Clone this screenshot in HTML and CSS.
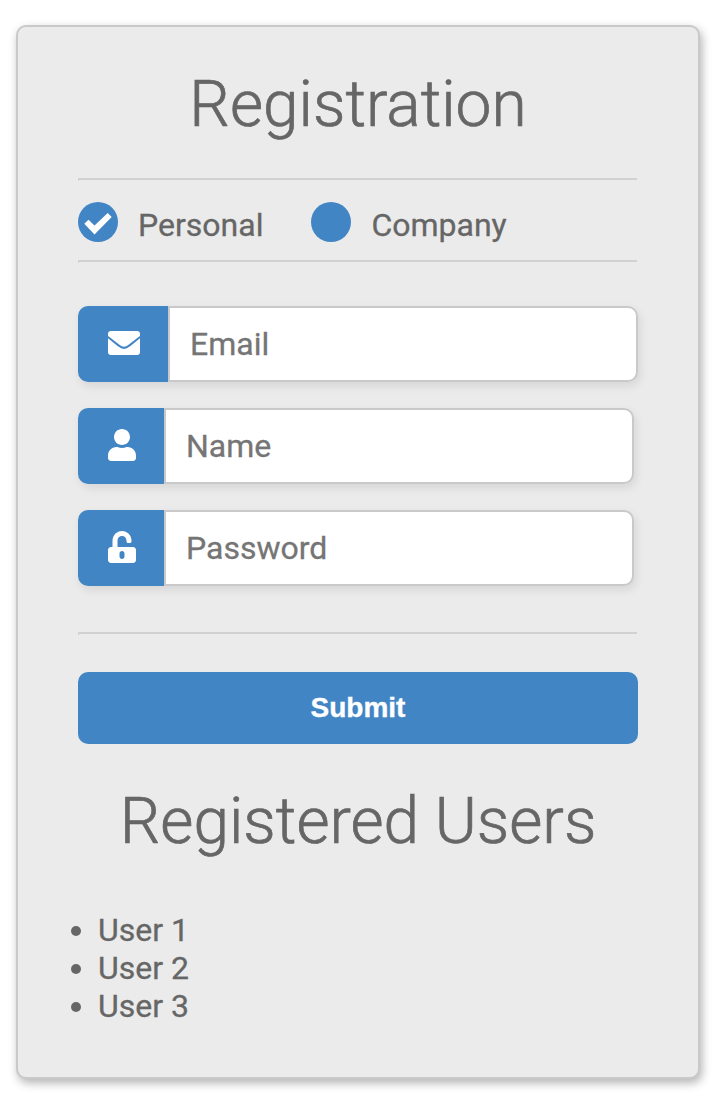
FILE: index.html
```html
<!DOCTYPE html>
<html lang="en">
<head>
<meta charset="utf-8">
<title>Registration</title>
<link rel="stylesheet" href="styles.css">
</head>
<body>
<main class="card">
  <h1 class="title">Registration</h1>
  <form class="form">
    <hr class="rule rule-first">
    <div class="types">
      <label class="type"><span class="radio"><svg class="check" viewBox="0 0 40 40"><path d="M6.300 21.700l4.200-3.900 6 5.700L29.700 11l4 4.100L16.500 32.500z" fill="#fff"/></svg></span><span class="type-text">Personal</span></label>
      <label class="type"><span class="radio"></span><span class="type-text">Company</span></label>
    </div>
    <hr class="rule">
    <div class="fields">
      <div class="field">
        <span class="icon icon-wide"><svg width="32" height="24" viewBox="0 0 32 24"><rect width="32" height="24" rx="3" fill="#fff"/><path d="M-.5 5.700L10.800 14.600Q16 19.100 21.200 14.600L32.500 5.700" fill="none" stroke="#4285c5" stroke-width="2"/></svg></span>
        <input class="input" type="text" placeholder="Email">
      </div>
      <div class="field">
        <span class="icon"><svg width="28" height="32" viewBox="0 0 448 512" fill="#fff"><path d="M224 256c70.700 0 128-57.300 128-128S294.700 0 224 0 96 57.300 96 128s57.300 128 128 128zm89.600 32h-16.700c-22.200 10.200-46.900 16-72.900 16s-50.600-5.800-72.900-16h-16.700C60.200 288 0 348.200 0 422.400V464c0 26.500 21.500 48 48 48h352c26.500 0 48-21.500 48-48v-41.600c0-74.200-60.200-134.400-134.400-134.400z"/></svg></span>
        <input class="input" type="text" placeholder="Name">
      </div>
      <div class="field">
        <span class="icon"><svg width="28" height="32" viewBox="0 0 448 512" fill="#fff"><path d="M400 256H152V152.900c0-39.600 31.700-72.500 71.300-72.900 40-.4 72.700 32.100 72.700 72v16c0 13.300 10.700 24 24 24h32c13.300 0 24-10.700 24-24v-16C376 68 307.500-.3 223.500 0 139.500.3 72 69.500 72 153.500V256H48c-26.500 0-48 21.500-48 48v160c0 26.500 21.500 48 48 48h352c26.500 0 48-21.500 48-48V304c0-26.500-21.500-48-48-48zM264 408c0 22.100-17.900 40-40 40s-40-17.900-40-40v-48c0-22.100 17.900-40 40-40s40 17.900 40 40v48z"/></svg></span>
        <input class="input" type="text" placeholder="Password">
      </div>
    </div>
    <hr class="rule">
    <div class="actions"><button class="submit" type="button">Submit</button></div>
  </form>
  <h2 class="title users-title">Registered Users</h2>
  <ul class="users"><li>User 1</li><li>User 2</li><li>User 3</li></ul>
</main>
</body>
</html>
```
FILE: styles.css
```css
* { box-sizing: border-box; }
body { margin: 0; height: 1102px; padding: 25px 20px 23px 16px; background: #fff; color: #666; font: 32px/38px Roboto, sans-serif; -webkit-text-stroke: .3px; }
.card { height: 1054px; padding: 40px 60px 0; background: #ebebeb; border: 2px solid #c9c9c9; border-radius: 10px; box-shadow: 2px 4px 10px rgba(0,0,0,.3); }
.title { margin: 0; height: 76px; font-size: 64px; line-height: 76px; font-weight: 300; text-align: center; -webkit-text-stroke: .7px; }
.rule { width: 559px; height: 3px; margin: 0 0 -1px; border: solid #d1d1d1; border-width: 2px 0 0 1px; }
.rule-first { margin-top: 35px; }
.types { display: flex; gap: 48px; height: 80px; padding-top: 22px; }
.type { display: flex; gap: 20px; height: 40px; }
.radio { width: 40px; height: 40px; border-radius: 50%; background: #4285c5; }
.check { display: block; }
.type-text { padding-top: 4px; }
.fields { display: grid; gap: 26px; padding: 44px 0 46px; }
.field { display: flex; width: max-content; height: 76px; border-radius: 10px; box-shadow: 2px 4px 10px rgba(0,0,0,.09); }
.icon { width: 86px; padding: 0 0 2px 2px; display: flex; align-items: center; justify-content: center; background: #4285c5; border-radius: 10px 0 0 10px; }
.icon-wide { width: 90px; }
.input { width: 470px; height: 76px; padding: 0 20px; border: 2px solid #c9c9c9; border-radius: 0 10px 10px 0; background: #fff; font: 32px Roboto, sans-serif; color: #666; -webkit-text-stroke: .3px; }
.input::placeholder { color: #757575; opacity: 1; }
.actions { padding-top: 38px; }
.submit { display: block; width: 560px; height: 72px; padding: 0; border: 0; border-radius: 10px; background: #4285c5; color: #fff; font: bold 28px "Liberation Sans", Arial, sans-serif; -webkit-text-stroke: .35px; }
.users-title { margin-top: 40px; }
.users { margin: 51px 0 0; padding: 0 0 0 20px; }
```
